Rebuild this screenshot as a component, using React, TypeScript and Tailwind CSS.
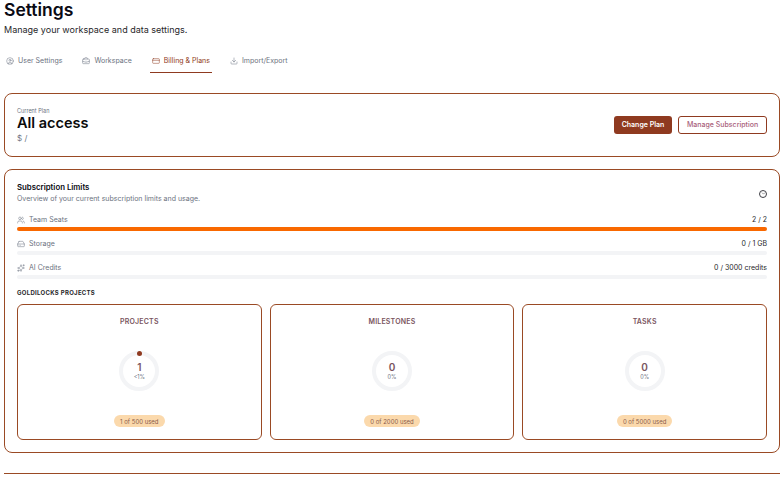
import { CircleUser, BriefcaseBusiness, CreditCard, Download, Users, HardDrive, Sparkles, ChevronDown } from "lucide-react";

const tabs = [
  { label: "User Settings", icon: CircleUser, active: false },
  { label: "Workspace", icon: BriefcaseBusiness, active: false },
  { label: "Billing & Plans", icon: CreditCard, active: true },
  { label: "Import/Export", icon: Download, active: false },
];

const limits = [
  { label: "Team Seats", value: "2 / 2", icon: Users, percent: 100 },
  { label: "Storage", value: "0 / 1 GB", icon: HardDrive, percent: 0 },
  { label: "AI Credits", value: "0 / 3000 credits", icon: Sparkles, percent: 0 },
];

const projects = [
  { title: "PROJECTS", count: "1", percent: "<1%", used: "1 of 500 used", dot: true },
  { title: "MILESTONES", count: "0", percent: "0%", used: "0 of 2000 used", dot: false },
  { title: "TASKS", count: "0", percent: "0%", used: "0 of 5000 used", dot: false },
];

export default function App() {
  return (
    <div className="h-[477px] w-[784px] overflow-hidden bg-white px-1 font-['Inter',sans-serif] text-[#0a0a14]">
      <h1 className="text-[17.5px] leading-[20px] font-semibold">Settings</h1>
      <p className="mt-[3px] text-[9px] leading-[14px] text-[#27272a]">Manage your workspace and data settings.</p>

      <div className="mt-[13px] flex h-[23px] gap-[16px]">
        {tabs.map((tab) => (
          <div
            key={tab.label}
            className={`flex items-center gap-[4px] border-b px-[2px] text-[7px] whitespace-nowrap ${
              tab.active ? "border-[#8f3a20] text-[#8f3a20]" : "border-transparent text-[#6b7280]"
            }`}
          >
            <tab.icon className="h-[8px] w-[8px] shrink-0" strokeWidth={1.5} />
            {tab.label}
          </div>
        ))}
      </div>

      <section className="mt-[20px] flex h-[64px] items-center justify-between rounded-[8px] border border-[#9a4a24] px-[12px]">
        <div>
          <p className="text-[5.5px] leading-[7px] text-[#6b7280]">Current Plan</p>
          <p className="mt-[-1px] text-[14.5px] leading-[18px] font-semibold text-[#0a0a0a]">All access</p>
          <p className="mt-[1px] text-[8px] leading-[10px] text-[#6b7280]">$ /</p>
        </div>
        <div className="flex items-center gap-[6px]">
          <button className="h-[18px] w-[58px] rounded-[3px] bg-[#8f3a20] text-[7px] font-semibold text-white">Change Plan</button>
          <button className="h-[18px] w-[89px] rounded-[3px] border border-[#8f3a20] bg-white text-[7px] font-medium text-[#a8607a]">
            Manage Subscription
          </button>
        </div>
      </section>

      <section className="mt-[12px] h-[284px] rounded-[8px] border border-[#9a4a24] px-[12px] pt-[12px]">
        <div className="flex items-center justify-between">
          <div>
            <h2 className="text-[7.8px] leading-[10px] font-semibold text-[#0a0a14]">Subscription Limits</h2>
            <p className="mt-[2px] text-[7px] leading-[10px] text-[#6b7280]">Overview of your current subscription limits and usage.</p>
          </div>
          <div className="mt-[1px] flex h-[8px] w-[8px] items-center justify-center rounded-full border border-[#3f3f46]">
            <ChevronDown className="h-[5px] w-[5px] text-[#3f3f46]" strokeWidth={2.5} />
          </div>
        </div>

        <div className="mt-[11px] flex flex-col gap-[8px]">
          {limits.map((limit) => (
            <div key={limit.label}>
              <div className="flex h-[10px] items-center justify-between text-[7px] leading-[10px]">
                <span className="flex items-center gap-[4px] text-[#6b7280]">
                  <limit.icon className="h-[8px] w-[8px]" strokeWidth={1.5} />
                  {limit.label}
                </span>
                <span className="text-[#27272a]">{limit.value}</span>
              </div>
              <div className="mt-[2px] h-[4px] rounded-full bg-[#f3f4f6]">
                <div className="h-full rounded-full bg-[#f96800]" style={{ width: `${limit.percent}%` }} />
              </div>
            </div>
          ))}
        </div>

        <h3 className="mt-[10px] text-[6px] leading-[8px] font-bold tracking-[0.3px] text-[#27272a]">GOLDILOCKS PROJECTS</h3>

        <div className="mt-[7px] grid grid-cols-3 gap-[8px]">
          {projects.map((project) => (
            <div key={project.title} className="flex h-[136px] flex-col items-center rounded-[6px] border border-[#9a4a24] pt-[12px]">
              <p className="text-[7px] leading-[10px] font-semibold tracking-[0.2px] text-[#7a5560]">{project.title}</p>
              <div className="relative mt-[24px] flex h-[40px] w-[40px] flex-col items-center justify-center rounded-full border-[4px] border-[#f3f4f6]">
                {project.dot && <span className="absolute top-[-4px] h-[4.5px] w-[4.5px] rounded-full bg-[#8f3a20]" />}
                <span className="text-[10px] leading-[11px] font-semibold text-[#7a5560]">{project.count}</span>
                <span className="mt-[1px] text-[5.5px] leading-[7px] text-[#6b7280]">{project.percent}</span>
              </div>
              <span className="mt-[24px] flex h-[12px] items-center rounded-full bg-[#fbd9ac] px-[6px] text-[6px] text-[#8a5a4a]">{project.used}</span>
            </div>
          ))}
        </div>
      </section>

      <div className="mt-[20px] border-t border-[#9a4a24]" />
    </div>
  );
}
